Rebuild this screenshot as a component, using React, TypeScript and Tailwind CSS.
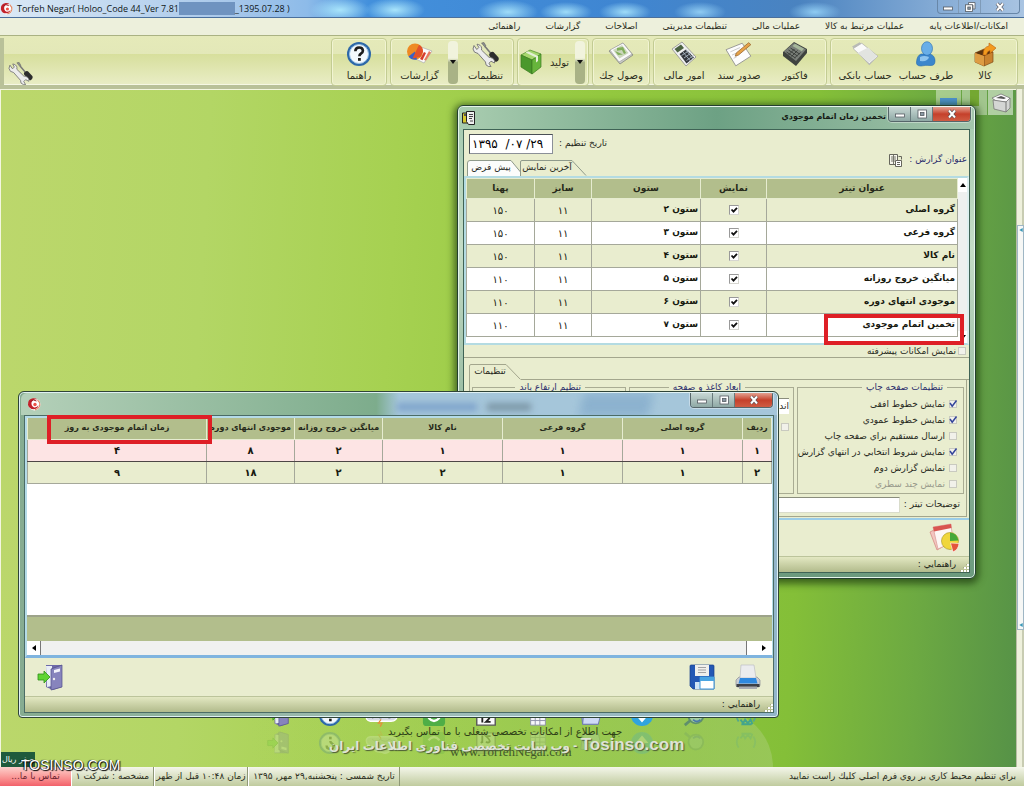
import React from "react";

type IconProps = { className?: string };

const Wrench = ({ className }: IconProps) => (
  <svg viewBox="0 0 28 26" className={className} aria-hidden="true">
    <path d="M9.500 2 12 1.500 14 5l-1.200 1z" fill="#8b8f8f" stroke="#555" strokeWidth=".5" />
    <path d="M13 5.500 18.500 12" stroke="#777" strokeWidth="1.600" />
    <path d="M17.500 12.500q1.500-2.500 4-1.500l5 5.500q1 2.500-1.500 4-1.500.8-3-.5l-4.500-5q-.8-1.200 0-2.500z" fill="#2d2d2d" />
    <path d="M2 4.500 1 8q.5 4 5 4.500l7.500 8.500q-.5 3.500 3 4.500l2.500.2-2-3.500 2-2 3.500 1.800q.8-4.500-4-5.500l-1.500-.2L9.500 9q.8-4-3-5.500L5 3.200l1.800 3.300-2 2z" fill="#ececec" stroke="#707070" strokeWidth=".9" />
  </svg>
);

const Help = ({ className }: IconProps) => (
  <svg viewBox="0 0 26 26" className={className} aria-hidden="true">
    <circle cx="13" cy="13" r="12" fill="#2d68a8" />
    <circle cx="13" cy="13" r="9.500" fill="#f4f9fd" stroke="#9cc4e6" />
    <path d="M9.300 10.300q.2-3.800 3.800-3.800t3.800 3.200q0 1.700-2 3-1.500 1-1.500 2.600" fill="none" stroke="#1d1d1d" strokeWidth="2.600" />
    <rect x="12" y="17" width="2.800" height="2.800" fill="#1d1d1d" />
  </svg>
);

const Reports = ({ className }: IconProps) => (
  <svg viewBox="0 0 28 24" className={className} aria-hidden="true">
    <path d="m15 5 11 4-8 12-10-5z" fill="#fbfbfb" stroke="#aaa" strokeWidth=".7" />
    <circle cx="9" cy="9.500" r="8" fill="#ee8a22" />
    <path d="M9 9.500 2.500 14.500q3 4 8.500 3z" fill="#3a62c4" />
    <path d="M13 2.800q4 2 4 7l-2.500 5-8 1.700z" fill="#e2512a" />
    <path d="m18 10-4 7 2.500 1.200L20 11z" fill="#d43c2c" />
    <path d="m23 9-5 9 2 .5 5-8z" fill="#e87a5e" />
  </svg>
);

const GreenBox = ({ className }: IconProps) => (
  <svg viewBox="0 0 22 26" className={className} aria-hidden="true">
    <path d="m1 6 9-5 11 4-9 6z" fill="#a5d66e" stroke="#4d8b2a" strokeWidth=".7" />
    <path d="m1 6 11 5v14L1 18z" fill="#4a982c" stroke="#3b7a21" strokeWidth=".7" />
    <path d="m12 11 9-6v13l-9 7z" fill="#67b53c" stroke="#3b7a21" strokeWidth=".7" />
    <path d="m5.500 3.500 10.500 5v5l2-1.400V7L8 2.200z" fill="#e4f0d6" />
  </svg>
);

const Cheque = ({ className }: IconProps) => (
  <svg viewBox="0 0 28 24" className={className} aria-hidden="true">
    <path d="m2 9 14-8 10 12-13 9z" fill="#c9cbc6" stroke="#83857f" strokeWidth=".8" />
    <path d="m3 8 13-7 9 11-13 8z" fill="#fafafa" stroke="#9b9b9b" strokeWidth=".6" />
    <path d="m6 8 9-5 6.500 8-9 5.500z" fill="#cbd7bd" />
    <path d="m10 6 6-1 3 6-2 1-2-4-5 .8zM8 9l3 4 5-.5" fill="#81ae5a" />
  </svg>
);

const Finance = ({ className }: IconProps) => (
  <svg viewBox="0 0 26 26" className={className} aria-hidden="true">
    <path d="M1 8 11 1l14 15-10 9z" fill="#f1f1f1" stroke="#8b8b8b" strokeWidth=".8" />
    <path d="m3.500 8 6.500-4.500 3 3.500-6.500 4.500z" fill="#4c6341" />
    <path d="m8.500 13 6.500-4.500 8 8-7.500 6z" fill="#33373d" />
    <path d="m10.500 14.500 7-4.500m-4.500 7 7-5m-4.500 7.500 7-5M12 11l7.500 9M15 9l7 9" stroke="#a9b6c3" strokeWidth=".9" />
  </svg>
);

const Voucher = ({ className }: IconProps) => (
  <svg viewBox="0 0 26 24" className={className} aria-hidden="true">
    <path d="m1 8 15-6 8 12-14 9z" fill="#fdfdfd" stroke="#8e8e8e" strokeWidth=".8" />
    <path d="m5 10 9-4m-7.500 7L11 11m-3 5 3-1.500" stroke="#bbb" strokeWidth=".7" />
    <path d="m9.500 14 1-3L22 1.500l2 1.800L12.500 13z" fill="#e6a348" stroke="#96612a" strokeWidth=".7" />
  </svg>
);

const Invoice = ({ className }: IconProps) => (
  <svg viewBox="0 0 26 26" className={className} aria-hidden="true">
    <path d="m1 11 11-10 13 7v4L14 25 1 15z" fill="#3f433f" />
    <path d="M2 10.500 12 2l12 6.500L14 20z" fill="#7a7f79" />
    <path d="m10.500 5 2.500-2.200 9 5-2.200 2.400z" fill="#a6b79a" />
    <path d="m6.500 9 9 6M8.500 7l9 6M4.500 11l9 6M12.500 8l-6 6m9-4.500-6 6m9-4-6 5.500" stroke="#343834" strokeWidth=".9" />
  </svg>
);

const BankCard = ({ className }: IconProps) => (
  <svg viewBox="0 0 26 24" className={className} aria-hidden="true">
    <path d="m1 5 7-4 17 13-8 8.500z" fill="#b9bbb6" />
    <path d="m2 7 8-5 15 12-8 7z" fill="#fafafa" stroke="#aaa" strokeWidth=".6" />
    <path d="M6 11 16 6l8 8-7 6z" fill="#e2e4e0" />
  </svg>
);

const Person = ({ className }: IconProps) => (
  <svg viewBox="0 0 22 26" className={className} aria-hidden="true">
    <path d="M6 13h9q5 1.500 5 7 0 5-5 4.500-4-.5-9 .5-5 0-4.500-4Q2 14.500 6 13z" fill="#3b86cc" stroke="#236aae" strokeWidth=".6" />
    <ellipse cx="12" cy="7.500" rx="5.500" ry="6.800" fill="#68aee8" stroke="#236aae" strokeWidth=".6" />
    <path d="M5 16q4-2 9 0-1 5-9 4z" fill="#8dc4ef" />
  </svg>
);

const Goods = ({ className }: IconProps) => (
  <svg viewBox="0 0 24 26" className={className} aria-hidden="true">
    <path d="m2 12 9-4 9 3v10l-9 4-9-4z" fill="#c9822e" stroke="#7f4a17" strokeWidth=".7" />
    <path d="m2 12 9 3 9-4-8-3z" fill="#5b340f" />
    <path d="M11 15v10" stroke="#7f4a17" />
    <path d="m2 12 9 3v10l-9-4z" fill="#dd9c42" />
    <path d="M10 14Q10 6 16 5V2l7 5-6 5.500V9.500q-3 .5-3.500 4.500z" fill="#f39a1e" stroke="#b85f10" strokeWidth=".6" />
  </svg>
);

const Swirl = ({ className }: IconProps) => (
  <svg viewBox="0 0 14 14" className={className} aria-hidden="true">
    <circle cx="7.500" cy="7.500" r="6" fill="#fff" />
    <path d="M1 8Q.5 2 6 1.200q3-.2 4.500 1.300Q6 1.800 4.600 5q-.8 4 2.500 5.400 3 .4 4.400-2.400-.3 3-3.300 4Q2.500 13 1 8z" fill="#c2222b" />
    <path d="M3.500 4.500Q6 1.500 9.500 4" fill="none" stroke="#a01a24" />
    <circle cx="8" cy="7.500" r="1.700" fill="#ed5348" />
    <path d="M10.500 3q2.500 2 2.300 5-.8 4-4.800 4.800" fill="none" stroke="#e08a6a" strokeWidth="1.200" />
  </svg>
);

const Door = ({ className }: IconProps) => (
  <svg viewBox="0 0 26 28" className={className} aria-hidden="true">
    <path d="M9 2h16v22l-9 3-7-3z" fill="#6d6aa8" />
    <path d="M9 3h6v20l-5 1z" fill="#e9eef5" />
    <path d="m14 6 11-4v22l-11 3z" fill="#8784bd" stroke="#514f8a" strokeWidth=".7" />
    <path d="m17 7 6-1.600v3L17 10z" fill="#f2f2fb" />
    <circle cx="17" cy="16" r="1.200" fill="#eee" />
    <path d="M1 11h6V8l6 6-6 6v-3H1z" fill="#5fd433" stroke="#2f8f19" strokeWidth=".8" />
  </svg>
);

const Floppy = ({ className }: IconProps) => (
  <svg viewBox="0 0 26 26" className={className} aria-hidden="true">
    <path d="M1 2q0-1 1-1h22q1 0 1 1v23H4l-3-3z" fill="#2458b4" stroke="#173f8b" strokeWidth=".7" />
    <path d="M6 1h14v11H6z" fill="#f0f0ec" />
    <path d="M9 3.500h8M9 6h8M9 8.500h8" stroke="#a3a3a3" />
    <path d="M6 18h6v7H6z" fill="#cfe4f6" />
    <path d="M11 13h14v12H11z" fill="#fff" stroke="#3c95d8" />
    <path d="M11 13h14v4H11z" fill="#4aa5e2" />
  </svg>
);

const Printer = ({ className }: IconProps) => (
  <svg viewBox="0 0 26 26" className={className} aria-hidden="true">
    <path d="M1 16l3-3h18l3 3v5q0 2-2 2H3q-2 0-2-2z" fill="#c9ccd3" stroke="#898c94" strokeWidth=".7" />
    <path d="M6 1h13l2 13H5z" fill="#ebecee" stroke="#bdbfc4" strokeWidth=".7" />
    <path d="M5 14h16l1.500 5.500h-19z" fill="#2f88de" />
    <path d="M1.500 20h23v3h-23z" fill="#3e4046" />
    <path d="M4 22.500h18V25H4z" fill="#a9abb0" />
  </svg>
);

const ReportPie = ({ className }: IconProps) => (
  <svg viewBox="0 0 30 30" className={className} aria-hidden="true">
    <path d="m1 9 8-4 6 18-7 4z" fill="#f3c5c0" stroke="#d2827c" strokeWidth=".7" />
    <path d="m4 4 18-3 2 18-15 7z" fill="#fdf6f4" stroke="#d99a94" strokeWidth=".7" />
    <path d="m4 4 18-3 .5 4L5 8.500z" fill="#d95550" />
    <circle cx="21" cy="18" r="8.500" fill="#f0d63c" stroke="#a59422" strokeWidth=".6" />
    <path d="M21 18V9.500q7 .5 8.500 8z" fill="#46a838" />
    <path d="m21.500 20 8.500.5q-.5 6-6 8.500z" fill="#e4543c" stroke="#fff" strokeWidth=".6" />
  </svg>
);

const ReportDoc = ({ className }: IconProps) => (
  <svg viewBox="0 0 14 14" className={className} aria-hidden="true">
    <path d="M.5 2h6v10h-6z" fill="#d6c82e" stroke="#222" />
    <path d="M4.500.5h8v13h-6l-2-3z" fill="#efefef" stroke="#222" />
    <path d="M7 3.500h4M7 5.500h4M7 7.500h3M8 10h3" stroke="#444" />
    <path d="M2 3h2v2H2z" fill="#555" />
  </svg>
);

const Copies = ({ className }: IconProps) => (
  <svg viewBox="0 0 14 14" className={className} aria-hidden="true">
    <path d="M.5 1.500h8v10h-8z" fill="#f6f6ec" stroke="#66665c" />
    <path d="M2 4h5M2 6h5M2 8h4M4.500 2v9" stroke="#77776d" />
    <path d="M6.500 7.500h6v6h-6z" fill="#fff" stroke="#66665c" />
    <path d="M8 9.500h3M8 11.500h3M9.500 3.500h3v3" stroke="#66665c" fill="none" />
  </svg>
);

const Storm = ({ className }: IconProps) => (
  <svg viewBox="0 0 38 26" className={className} aria-hidden="true">
    <path d="M6 20q-6-1-4-7 2-4 6-3 2-8 10-7 6-4 11 3 7 0 7 7 0 7-7 7z" fill="#d9dce6" stroke="#fff" strokeWidth="1.500" />
    <path d="M8 17q5-4 9 0 6-4 10 0 4-3 7-1" stroke="#9aa0b4" fill="none" />
    <path d="m18 18-3 4h4l-2 4" stroke="#e88d3a" strokeWidth="1.300" fill="none" />
  </svg>
);
const GreenApp = ({ className }: IconProps) => (
  <svg viewBox="0 0 26 26" className={className} aria-hidden="true">
    <rect x="1" y="1" width="24" height="24" rx="4" fill="#4fae46" />
    <path d="M7 16q6 7 12 0" stroke="#fff" strokeWidth="2.500" fill="none" />
  </svg>
);
const DayCal = ({ className }: IconProps) => (
  <svg viewBox="0 0 26 26" className={className} aria-hidden="true">
    <path d="M3 2h20v22H3z" fill="#fafafa" stroke="#555" strokeWidth="1.500" />
    <path d="M9 13v8M7.500 14.500 9 13M13 14.500q2-2 4 0 .5 2-4 6h5" stroke="#222" strokeWidth="2" fill="none" />
    <path d="M3 2h20v6H3z" fill="#888" />
  </svg>
);
const GridCal = ({ className }: IconProps) => (
  <svg viewBox="0 0 26 26" className={className} aria-hidden="true">
    <path d="M5 2h16v22H5z" fill="#f7f7fb" stroke="#8d8fa8" />
    <path d="M5 10h16M5 14h16M5 19h16M10 10v14M15 10v14" stroke="#8d8fa8" />
  </svg>
);
const FolderIcon = ({ className }: IconProps) => (
  <svg viewBox="0 0 26 26" className={className} aria-hidden="true">
    <path d="M3 6h8l2 3h9v14H5z" fill="#a9b4e2" stroke="#6a76ad" />
    <path d="m6 13 19-2-3 12H5z" fill="#cfdaf6" stroke="#6a76ad" />
  </svg>
);
const DownBall = ({ className }: IconProps) => (
  <svg viewBox="0 0 26 26" className={className} aria-hidden="true">
    <circle cx="13" cy="13" r="12" fill="#30a4e0" />
    <path d="M10 5h6v8h4l-7 8-7-8h4z" fill="#fff" />
  </svg>
);
const Magnify = ({ className }: IconProps) => (
  <svg viewBox="0 0 26 26" className={className} aria-hidden="true">
    <circle cx="15" cy="14" r="8" fill="#a3cda0" stroke="#5f8f6c" strokeWidth="2" />
    <path d="m9 19-6 5" stroke="#5f8f6c" strokeWidth="3" />
    <path d="M12 18q4 4 8 0" stroke="#4a79a8" strokeWidth="2" fill="none" />
  </svg>
);
const Globe = ({ className }: IconProps) => (
  <svg viewBox="0 0 26 26" className={className} aria-hidden="true">
    <path d="M5 20q-4-6 0-12M21 20q4-6 0-12" stroke="#54a88e" strokeWidth="2" fill="none" />
    <path d="m7 18 3 4 2-4 3 4 3-4 2 5M8 23h11" stroke="#43a58c" strokeWidth="2" fill="none" />
  </svg>
);

const Check = ({ checked = false, label, muted = false }: { checked?: boolean; label: string; muted?: boolean }) => (
  <span className="inline-grid h-2 w-2 shrink-0">
    <input
      type="checkbox"
      defaultChecked={checked}
      disabled={muted}
      aria-label={label}
      className="peer col-start-1 row-start-1 h-2 w-2 appearance-none border border-[#c9cac0] bg-[#f1f1ea]"
    />
    <svg viewBox="0 0 8 8" className="pointer-events-none invisible col-start-1 row-start-1 h-2 w-2 overflow-visible peer-checked:visible" aria-hidden="true">
      <path d="m1 3 2.200 3.200L7.500.5" stroke="#33449a" strokeWidth="1.500" fill="none" />
    </svg>
  </span>
);

const GridCheck = ({ label }: { label: string }) => (
  <span className="inline-grid h-2.5 w-2.5 align-middle">
    <input
      type="checkbox"
      defaultChecked
      aria-label={label}
      className="peer col-start-1 row-start-1 h-2.5 w-2.5 appearance-none border border-[#d6d6d0] border-t-[#999] border-l-[#999] bg-white"
    />
    <svg viewBox="0 0 10 10" className="pointer-events-none invisible col-start-1 row-start-1 h-2.5 w-2.5 peer-checked:visible" aria-hidden="true">
      <path d="m2.500 4.500 2 2.200L8 2.800" stroke="#111" strokeWidth="1.800" fill="none" />
    </svg>
  </span>
);

const Minus = () => (
  <svg viewBox="0 0 12 10" className="h-2.5 w-3" aria-hidden="true">
    <rect x="1.500" y="5" width="9" height="3" fill="#fff" stroke="#555b62" strokeWidth=".8" />
  </svg>
);
const Box = () => (
  <svg viewBox="0 0 12 10" className="h-2.5 w-3" aria-hidden="true">
    <rect x="2" y="1" width="8.500" height="8" fill="#fff" stroke="#555b62" strokeWidth=".8" />
    <rect x="4.500" y="3.500" width="3.500" height="3" fill="#8b9aa5" stroke="#555b62" strokeWidth=".8" />
  </svg>
);
const Restore = () => (
  <svg viewBox="0 0 12 10" className="h-2.5 w-3" aria-hidden="true">
    <path d="M4.500.500h6.500v6.500h-2V3h-4.500z" fill="#fff" stroke="#555b62" strokeWidth=".8" />
    <rect x="1.500" y="2.800" width="7" height="6.700" fill="#fff" stroke="#555b62" strokeWidth=".8" />
    <rect x="3.800" y="5" width="2.500" height="2.300" fill="#8b9aa5" stroke="#555b62" strokeWidth=".8" />
  </svg>
);
const Cross = () => (
  <svg viewBox="0 0 12 10" className="h-2.5 w-3" aria-hidden="true">
    <path d="m3 1.500 6 7m0-7-6 7" stroke="#4d4a50" strokeWidth="3.400" />
    <path d="m3 1.500 6 7m0-7-6 7" stroke="#fff" strokeWidth="2" />
  </svg>
);

const WindowButtons = () => (
  <div className="flex h-[15px] overflow-hidden rounded-b border border-t-0 border-[#56666a] shadow-[0_0_0_1px_#ffffff60]">
    <button aria-label="Minimize" className="flex w-[22px] items-center justify-center border-r border-[#687a7c] bg-linear-to-b from-[#c8d8d5] to-[#8fa9a5]"><Minus /></button>
    <button aria-label="Maximize" className="flex w-[22px] items-center justify-center border-r border-[#687a7c] bg-linear-to-b from-[#c8d8d5] to-[#8fa9a5]"><Box /></button>
    <button aria-label="Close" className="flex w-[37px] items-center justify-center bg-linear-to-b from-[#e3a090] via-[#c5402b] to-[#cf5c43]"><Cross /></button>
  </div>
);

const menus = [
  "امکانات/اطلاعات پایه",
  "عملیات مرتبط به کالا",
  "عملیات مالی",
  "تنظیمات مدیریتی",
  "اصلاحات",
  "گزارشات",
  "راهنمائی",
];

const ToolButton = ({ icon: Icon, text, width }: { icon: React.FC<IconProps>; text: string; width: string }) => (
  <button className={`${width} flex flex-col items-center gap-px pt-0.5 text-[10px] leading-4 whitespace-nowrap text-[#2c2e20]`}>
    <Icon className="h-[26px] w-[28px]" />
    {text}
  </button>
);

const DropStrip = ({ label }: { label: string }) => (
  <button aria-label={label} className="flex h-[43px] w-[10px] items-center justify-center self-center rounded-sm bg-linear-to-b from-[#f1f3dd] from-40% to-[#a9b286] to-50%">
    <svg viewBox="0 0 6 4" className="h-1 w-1.5" aria-hidden="true"><path d="M0 0h6L3 4z" fill="#111" /></svg>
  </button>
);

const groupCls = "flex h-[48px] rounded border border-[#c3cc93] shadow-[inset_0_0_0_1px_#f1f4d2]";

const titleRows: [string, string, string][] = [
  ["گروه اصلی", "ستون ۲", "۱۵۰"],
  ["گروه فرعی", "ستون ۳", "۱۵۰"],
  ["نام کالا", "ستون ۴", "۱۵۰"],
  ["میانگین خروج روزانه", "ستون ۵", "۱۱۰"],
  ["موجودی انتهای دوره", "ستون ۶", "۱۱۰"],
  ["تخمین اتمام موجودی", "ستون ۷", "۱۱۰"],
];

const options: { text: string; on?: boolean; muted?: boolean }[] = [
  { text: "نمایش خطوط افقی", on: true },
  { text: "نمایش خطوط عمودي", on: true },
  { text: "ارسال مستقیم براي صفحه چاپ" },
  { text: "نمایش شروط انتخابي در انتهاي گزارش", on: true },
  { text: "نمایش گزارش دوم" },
  { text: "نمایش چند سطري", muted: true },
];

const resultHead = ["ردیف", "گروه اصلی", "گروه فرعی", "نام کالا", "میانگین خروج روزانه", "موجودی انتهای دوره", "زمان اتمام موجودی به روز"];
const resultRows = [
  ["۱", "۱", "۱", "۱", "۲", "۸", "۴"],
  ["۲", "۱", "۱", "۲", "۲", "۱۸", "۹"],
];

const dock = [Door, Help, Storm, GreenApp, DayCal, GridCal, FolderIcon, DownBall, Magnify, Globe];

const Grip = () => (
  <svg viewBox="0 0 9 9" className="h-[9px] w-[9px] self-end" aria-hidden="true">
    <path d="M7 1h2v2H7zM4 4h2v2H4zM7 4h2v2H7zM1 7h2v2H1zM4 7h2v2H4zM7 7h2v2H7z" fill="#fff" />
    <path d="M6 1h1v1H6zM3 4h1v1H3zM6 4h1v1H6zM0 7h1v1H0zM3 7h1v1H3zM6 7h1v1H6z" fill="#a4ab82" />
  </svg>
);

const HelpBar = () => (
  <div dir="rtl" className="flex h-4 shrink-0 items-center border-t border-[#bcc49b] bg-linear-to-b from-[#e3e8c2] to-[#b2bb8c] pl-0.5 text-[9px] text-[#23251a]">
    <Grip />
    <span className="px-1">راهنمايي :</span>
  </div>
);

const TitlesWindow = () => (
  <section className="absolute top-[15px] left-[456px] flex h-[474px] w-[519px] flex-col rounded-md border border-[#24402f] bg-linear-to-b from-[#a3c9ae] via-[#c4dcc6] via-30% to-[#6b9a7e] px-[5px] pb-[5px] shadow-[0_2px_7px_3px_#1d3c10b0,inset_0_0_0_1px_#e4f4ea]">
    <header className="-mx-1 mt-px flex h-[22px] shrink-0 items-start justify-between rounded-t-md bg-linear-to-r from-[#a9cdb0] via-[#6da184] via-50% to-[#a3c5ac] px-[3px]">
      <ReportDoc className="mt-1 h-[14px] w-[14px]" />
      <div className="flex items-start gap-0.5">
        <h2 dir="rtl" className="pt-0.5 text-[8px] leading-4 font-bold text-[#151b15]">تخمين زمان اتمام موجودي</h2>
        <WindowButtons />
      </div>
    </header>
    <div className="flex min-h-0 flex-1 flex-col border border-[#3f6355] bg-[#e9edcf] text-[9px] text-[#26281c]">
      <div className="flex h-[46px] shrink-0 items-stretch justify-between pr-0.5 pl-[3px]">
        <div className="flex flex-col justify-between pt-1">
          <label dir="rtl" className="flex flex-row-reverse items-center justify-end gap-1.5 pl-0.5">
            <input dir="ltr" aria-label="تاریخ تنظیم" defaultValue="۱۳۹۵  /۰۷ /۲۹" className="h-5 w-[84px] border border-[#8b9098] border-t-[#4a4f55] border-l-[#4a4f55] bg-white px-0.5 text-[12px] whitespace-pre text-black" />
            <span>تاریخ تنظیم :</span>
          </label>
          <div className="flex h-4 items-end">
            <button className="grid h-4 w-[54px] text-[9px]">
              <svg viewBox="0 0 54 16" preserveAspectRatio="none" className="col-start-1 row-start-1 h-4 w-[54px]" aria-hidden="true"><path d="M.5 16V3Q.5.500 3 .5h41L53.500 12v4" fill="#fbfcfb" stroke="#8f9a8b" /></svg>
              <span className="col-start-1 row-start-1 self-center pr-1.5">پیش فرض</span>
            </button>
            <button className="-ml-1 grid h-4 w-[70px] text-[9px]">
              <svg viewBox="0 0 70 16" className="col-start-1 row-start-1 h-4 w-[70px]" aria-hidden="true"><path d="M3.500 16V2Q3.500.500 5 .5h50L69 15.500" fill="none" stroke="#8f9a8b" /></svg>
              <span className="col-start-1 row-start-1 self-center pr-2.5">آخرین نمایش</span>
            </button>
          </div>
        </div>
        <div dir="rtl" className="flex items-center gap-1.5 pt-[13px] text-[#2d2f6d]">
          <span>عنوان گزارش :</span>
          <Copies className="h-[14px] w-[14px]" />
        </div>
      </div>
      <div dir="rtl" className="flex h-[169px] shrink-0 border-2 border-[#b4dbe2] border-r-[#dff0f0] bg-white">
        <div className="flex w-[9px] shrink-0 flex-col justify-between bg-[#eef0ef]">
          <button aria-label="Scroll up" className="flex h-[14px] items-center justify-center bg-white"><svg viewBox="0 0 6 4" className="h-1 w-1.5"><path d="M0 4h6L3 0z" /></svg></button>
          <button aria-label="Scroll down" className="flex h-[12px] items-center justify-center bg-white"><svg viewBox="0 0 6 4" className="h-1 w-1.5"><path d="M0 0h6L3 4z" /></svg></button>
        </div>
        <table className="h-[158px] flex-1 table-fixed border-collapse text-[9px] font-bold text-[#17190f]">
          <thead>
            <tr className="h-5 bg-[#b2be8c] text-[#26291a]">
              <th className="border border-[#e6ecd0]">عنوان تیتر</th>
              <th className="w-[66px] border border-[#e6ecd0]">نمایش</th>
              <th className="w-[109px] border border-[#e6ecd0]">ستون</th>
              <th className="w-[57px] border border-[#e6ecd0]">سایز</th>
              <th className="w-[68px] border border-[#e6ecd0]">پهنا</th>
            </tr>
          </thead>
          <tbody>
            {titleRows.map(([name, col, w]) => (
              <tr key={name} className="h-[23px] bg-white odd:bg-[#e9edcf]">
                <td className="border border-[#a5a89a] p-0 pr-0.5">{name}</td>
                <td className="border border-[#a5a89a] p-0 text-center leading-none"><GridCheck label={name} /></td>
                <td className="border border-[#a5a89a] p-0 pr-0.5">{col}</td>
                <td className="border border-[#a5a89a] p-0 text-center text-[10px] font-normal">۱۱</td>
                <td className="border border-[#a5a89a] p-0 text-center text-[10px] font-normal">{w}</td>
              </tr>
            ))}
          </tbody>
        </table>
      </div>
      <label dir="rtl" className="flex h-[13px] shrink-0 items-center gap-0.5 border-b border-[#a3a68d] pr-[3px]">
        <Check label="نمایش امکانات پیشرفته" />
        <span className="leading-3">نمایش امکانات پیشرفته</span>
      </label>
      <div className="mt-[6px] ml-[5px] flex h-4 shrink-0">
        <button className="grid h-4 w-[52px] text-[9px]">
          <svg viewBox="0 0 52 16" className="col-start-1 row-start-1 h-4 w-[52px]" aria-hidden="true"><path d="M.5 16V2Q.5.500 2 .5h35L51.500 15.500" fill="none" stroke="#a3a68d" /></svg>
          <span className="col-start-1 row-start-1 self-center pr-2.5">تنظیمات</span>
        </button>
        <div className="flex-1 border-b border-[#a3a68d]" />
      </div>
      <div dir="rtl" className="mr-0.5 ml-[5px] flex h-[137px] shrink-0 flex-col border-x border-b border-[#a3a68d]">
        <div className="flex gap-[3px] px-0.5">
          <fieldset className="h-[114px] w-[167px] min-w-0 shrink-0 border border-[#a9ac93] pr-1.5">
            <legend className="mr-2.5 px-1 leading-[14px] text-[#2d2f6d]">تنظیمات صفحه چاپ</legend>
            <div className="pt-0.5">
              {options.map((o) => (
                <label key={o.text} className={`flex h-4 items-center gap-1 whitespace-nowrap ${o.muted ? "text-[#96988a]" : ""}`}>
                  <Check checked={o.on} muted={o.muted} label={o.text} />
                  <span className="leading-4">{o.text}</span>
                </label>
              ))}
            </div>
          </fieldset>
          <fieldset className="h-[114px] min-w-0 flex-1 border border-[#a9ac93] pr-1">
            <legend className="mr-11 px-1 leading-[14px] text-[#2d2f6d]">ابعاد کاغذ و صفحه</legend>
            <select aria-label="اندازه کاغذ" className="mt-1 block h-4 w-[120px] appearance-none border-t border-[#8a8d7c] bg-white">
              <option>اندازه کاغذ</option>
            </select>
            <label className="mt-1.5 flex items-center gap-1">
              <Check label="نمایش حاشیه" />
              <span>نمایش حاشیه</span>
            </label>
          </fieldset>
          <fieldset className="h-[114px] w-[154px] min-w-0 border border-[#a9ac93]">
            <legend className="mr-10 px-1 leading-[14px] text-[#2d2f6d]">تنظیم ارتفاع باند</legend>
          </fieldset>
        </div>
        <label className="flex items-center gap-1 pt-[3px] pr-1.5">
          <span>توضیحات تیتر :</span>
          <input aria-label="توضیحات تیتر" className="h-4 flex-1 border border-[#d9dccb] border-t-[#8a8d7c] bg-white" />
        </label>
      </div>
      <div className="mt-px flex flex-1 items-center justify-end border-t-2 border-[#9bcde8] pr-2.5">
        <button aria-label="گزارش"><ReportPie className="h-[30px] w-[30px]" /></button>
      </div>
      <HelpBar />
    </div>
    <div className="pointer-events-none absolute top-[208px] left-[366px] h-[31px] w-[140px] border-4 border-[#de1f26]" />
  </section>
);

const ResultWindow = () => (
  <section className="absolute top-[301px] left-[17px] flex h-[327px] w-[761px] flex-col rounded-t-md rounded-b-sm border border-[#2f4438] bg-linear-to-r from-[#86ac91] via-[#9fbdb4] to-[#93b6cb] pr-1 pb-1 pl-[5px] shadow-[inset_0_0_0_1px_#dff1f3]">
    <header className="relative -mx-[3px] mt-px flex h-[22px] shrink-0 items-start justify-between overflow-hidden rounded-t-md bg-linear-to-r from-[#b4d0b9] via-[#7dac8c] via-47% to-[#a5c6da] to-50% pr-1 pl-1.5">
      <div className="absolute top-2.5 left-[376px] h-2 w-[80px] bg-[#7fa4cc] blur-[3px]" />
      <div className="absolute top-2.5 left-[466px] h-2 w-[44px] bg-[#7d98a8] blur-[3px]" />
      <div className="absolute top-0 left-[560px] h-6 w-[70px] -skew-x-12 bg-[#8cb2cf] blur-[5px]" />
      <Swirl className="relative mt-1 h-[14px] w-[14px]" />
      <div className="relative"><WindowButtons /></div>
    </header>
    <div className="flex min-h-0 flex-1 flex-col border border-[#4b6c66] bg-[#e9edcf]">
      <div dir="rtl" className="flex h-[242px] shrink-0 flex-col border-2 border-r-[1px] border-b-[3px] border-[#b4dbe8] border-b-[#7fb4df] bg-white">
        <table className="w-full table-fixed border-collapse text-[10px] font-bold text-[#17190f]">
          <thead>
            <tr className="h-[21px] bg-[#b2be8c] text-[8px] whitespace-nowrap text-[#26291a]">
              {resultHead.map((h, i) => (
                <th
                  key={h}
                  className={`border border-[#e6ecd0] border-t-0 p-0 ${i === 0 ? "w-[29px]" : i < 4 ? "w-[120px]" : i < 6 ? "w-[88px]" : ""}`}
                >
                  {h}
                </th>
              ))}
            </tr>
          </thead>
          <tbody>
            {resultRows.map((r, ri) => (
              <tr key={ri} className={`h-[22px] text-center ${ri === 0 ? "bg-[#fde4e4]" : "bg-[#e9edcf]"}`}>
                {r.map((c, i) => (
                  <td key={i} className={`border border-[#a5a89a] p-0 ${ri === 0 ? "border-b-[#4d4646]" : ""}`}>{c}</td>
                ))}
              </tr>
            ))}
          </tbody>
        </table>
        <div className="flex-1" />
        <div className="h-[26px] border-t-2 border-[#9da38a] bg-[#b2be8c]" />
        <div dir="ltr" className="flex h-[14px] justify-between bg-[#f0f1f0]">
          <button aria-label="Scroll left" className="flex w-[14px] items-center justify-center border-r border-[#777] bg-white"><svg viewBox="0 0 4 6" className="h-1.5 w-1"><path d="M4 0v6L0 3z" /></svg></button>
          <button aria-label="Scroll right" className="flex w-[26px] items-center justify-end border-l border-[#777] bg-white pr-1.5"><svg viewBox="0 0 4 6" className="h-1.5 w-1"><path d="M0 0v6l4-3z" /></svg></button>
        </div>
      </div>
      <div className="flex flex-1 items-center justify-between px-3">
        <button aria-label="خروج"><Door className="h-[28px] w-[26px]" /></button>
        <div className="flex gap-5">
          <button aria-label="ذخیره"><Floppy className="h-[26px] w-[26px]" /></button>
          <button aria-label="چاپ"><Printer className="h-[26px] w-[26px]" /></button>
        </div>
      </div>
      <HelpBar />
    </div>
    <div className="pointer-events-none absolute top-[23px] left-[28px] h-[29px] w-[165px] border-4 border-[#de1f26]" />
  </section>
);

export default function App() {
  return (
    <div className="flex min-h-screen flex-col overflow-hidden bg-[#e9edcf] font-['DejaVu_Sans',sans-serif]">
      <header className="flex h-[18px] shrink-0 items-start justify-between border-b border-[#4a6f9c] bg-[radial-gradient(ellipse_30px_12px_at_340px_10px,#a8e4fb,transparent),radial-gradient(ellipse_30px_12px_at_395px_10px,#a8e4fb,transparent),radial-gradient(ellipse_30px_12px_at_508px_12px,#9fdcf8,transparent),radial-gradient(ellipse_26px_10px_at_566px_12px,#9fdcf8,transparent),radial-gradient(ellipse_26px_10px_at_625px_12px,#9fdcf8,transparent),radial-gradient(ellipse_26px_10px_at_700px_12px,#8fcbf2,transparent),radial-gradient(ellipse_26px_10px_at_815px_12px,#8fcbf2,transparent),linear-gradient(to_right,#dbe9f6,#a9c8ea_22%,#8dbbe9_30%,#4390dc_36%,#3f86d2_60%,#4a83c0_78%,#a9c4e2)] pr-1">
        <h1 dir="ltr" className="flex h-[17px] items-center font-['Open_Sans',sans-serif] text-[9px] whitespace-nowrap text-[#101820]">
          <Swirl className="mr-1 h-[13px] w-[13px]" />
          <span>Torfeh Negar( Holoo_Code 44_Ver 7.81</span>
          <span className="h-[13px] w-14 bg-[#6f93c0]" />
          <span>_1395.07.28 )</span>
        </h1>
        <div className="flex h-[14px] rounded-b border border-t-0 border-[#6887a8]">
          <button aria-label="Minimize" className="flex w-[21px] items-center justify-center border-r border-[#7f9bb8]"><Minus /></button>
          <button aria-label="Restore" className="flex w-[22px] items-center justify-center border-r border-[#7f9bb8]"><Restore /></button>
          <button aria-label="Close" className="flex w-[38px] items-center justify-center"><Cross /></button>
        </div>
      </header>

      <nav dir="rtl" className="flex h-[17px] shrink-0 items-center gap-[25px] bg-[#edf0dc] pr-4 text-[9px] whitespace-nowrap text-[#2a2c20]">
        {menus.map((t) => (
          <a key={t} href="#">{t}</a>
        ))}
      </nav>

      <div dir="rtl" className="flex h-[54px] shrink-0 items-start justify-between border-t border-b-4 border-[#aab283] border-b-[#b9c199] bg-[linear-gradient(#e5eab9,#e3e8b8_36%,#d7df9c_37%,#e9edc6)] pt-0.5 pr-1.5 shadow-[inset_0_-1px_0_#f6f8e4]">
        <div className="flex gap-[3px]">
          <div className={groupCls}>
            <ToolButton icon={Goods} text="کالا" width="w-[64px]" />
            <ToolButton icon={Person} text="طرف حساب" width="w-[54px]" />
            <ToolButton icon={BankCard} text="حساب بانکی" width="w-[68px]" />
          </div>
          <div className={groupCls}>
            <ToolButton icon={Invoice} text="فاکتور" width="w-[62px]" />
            <ToolButton icon={Voucher} text="صدور سند" width="w-[50px]" />
            <ToolButton icon={Finance} text="امور مالی" width="w-[60px]" />
          </div>
          <div className={groupCls}>
            <ToolButton icon={Cheque} text="وصول چك" width="w-[56px]" />
          </div>
          <div className={groupCls}>
            <span className="w-[3px]" />
            <DropStrip label="تولید" />
            <button className="flex w-[57px] items-center justify-center gap-2 pr-1 text-[10px] text-[#2c2e20]">
              تولید
              <GreenBox className="h-[26px] w-[22px]" />
            </button>
          </div>
          <div className={groupCls}>
            <ToolButton icon={Wrench} text="تنظیمات" width="w-[55px]" />
            <DropStrip label="گزارشات" />
            <ToolButton icon={Reports} text="گزارشات" width="w-[57px]" />
          </div>
          <div className={groupCls}>
            <ToolButton icon={Help} text="راهنما" width="w-[54px]" />
          </div>
        </div>
        <div className="flex h-[49px] items-end border-l-4 border-[#b9c199] pb-0.5 pl-1">
          <Wrench className="h-6 w-[26px]" />
        </div>
      </div>

      <main className="flex min-h-[678px] flex-1">
        <div className="relative flex-1 overflow-hidden border-t border-l border-[#f3f6e0] bg-[linear-gradient(93deg,#bcd76c,#b3d665_20%,#a6d151_38%,#93c83f_58%,#84bf38_78%,#6ca942_90%,#569247)]">
          <div className="absolute top-0 right-[3px] flex gap-px">
            <div className="h-[25px] w-[25px] bg-white/40 p-1"><div className="mt-1 h-2 bg-[#4c92cf]" /></div>
            <div className="h-[25px] w-[25px] bg-white/40 px-2"><div className="h-4 bg-[#74a832]" /></div>
            <button aria-label="بایگانی" className="flex h-[25px] w-[25px] items-center justify-center bg-white/50">
              <svg viewBox="0 0 22 22" className="h-[22px] w-[22px]" aria-hidden="true">
                <path d="m2 6 9-4 9 4-3 4-11-1z" fill="#fafafa" stroke="#777" strokeWidth=".8" />
                <path d="m3 8 13 2 4-4v10l-4 4-12-3z" fill="#d4d6d4" stroke="#777" strokeWidth=".8" />
                <path d="M16 10v10" stroke="#777" />
                <path d="m6 6 5-2 5 2-2 1z" fill="#555" />
              </svg>
            </button>
          </div>

          <div className="absolute bottom-0 left-[244px] h-[58px] w-[528px] rounded-tr-[60px] bg-linear-to-r from-transparent to-[#a4cb6c]/60" />
          <div className="absolute bottom-[12px] left-[258px] flex gap-[14px]">
            {dock.map((Icon, i) => (
              <div key={i} className="flex w-[38px] flex-col items-center gap-1">
                <Icon className="h-6 w-[34px]" />
                <Icon className="h-6 w-[34px] -scale-y-100 opacity-20" />
              </div>
            ))}
          </div>
          <p dir="rtl" className="absolute bottom-[25px] left-[387px] text-[10px] leading-5 whitespace-nowrap text-[#2e4017]">جهت اطلاع از امکانات تخصصی شغلی با ما تماس بگیرید</p>
          <p className="absolute bottom-[7px] left-[449px] font-['Liberation_Serif',serif] text-[13px] leading-4 text-[#40582a]">www.TorfehNegar.com</p>
          <p dir="rtl" className="absolute bottom-[9px] left-[328px] font-['Liberation_Sans','DejaVu_Sans',sans-serif] text-[12px] leading-6 font-bold whitespace-nowrap text-[#dfe3d6] [text-shadow:1px_1px_1px_#4c5b36]">
            <span className="text-[17px]">Tosinso.com</span> - وب سایت تخصصی فناوری اطلاعات ایران
          </p>
          <TitlesWindow />
          <ResultWindow />
          <div dir="rtl" className="absolute bottom-0 left-0 h-[15px] bg-[#1f5a3c] px-px text-[8px] leading-[15px] whitespace-nowrap text-white">صفر ریال</div>
        </div>
        <aside className="flex w-2 flex-col border-l border-[#b9bda5] bg-[#eef0dc]">
          <div className="h-[136px] border-r-2 border-[#c8ccb2]" />
          <div className="flex h-[405px] flex-col justify-between border border-[#9fb6c4] bg-[#f6f7f5] py-0.5">
            <svg viewBox="0 0 5 6" className="h-1 w-1.5"><path d="M5 0v6L0 3z" fill="#3a98b8" /></svg>
            <svg viewBox="0 0 5 6" className="h-1 w-1.5"><path d="M5 0v6L0 3z" fill="#3a98b8" /></svg>
          </div>
          <div className="flex-1 border-r-2 border-[#c8ccb2]" />
        </aside>
      </main>

      <footer dir="rtl" className="relative flex h-[19px] shrink-0 items-stretch bg-linear-to-b from-[#f4f6ea] to-[#c0cb9e] text-[9px] leading-[19px] whitespace-nowrap text-[#2a2c20]">
        <span className="flex-1 pr-2">براي تنظیم محیط کاري بر روي فرم اصلي کلیك راست نمایید</span>
        <span className="w-[152px] border-x border-r-[#8f9877] border-l-white text-center">تاریخ شمسی : پنجشنبه,۲۹ مهر, ۱۳۹۵</span>
        <span className="w-[94px] border-x border-r-[#8f9877] border-l-white text-center">زمان ۱۰:۴۸ قبل از ظهر</span>
        <span className="w-[83px] border-x border-r-[#8f9877] border-l-white text-center">مشخصه : شرکت ۱</span>
        <a href="#" className="w-[71px] bg-linear-to-b from-[#fbd0cc] to-[#f2606a] text-center text-[#6a2430]">تماس با ما...</a>
        <div dir="ltr" className="pointer-events-none absolute bottom-[13px] left-[21px] font-['Liberation_Sans',sans-serif] text-[14px] leading-4 text-white [text-shadow:1px_1px_1px_#000,-1px_0_1px_#000]">TOSINSO.COM</div>
      </footer>
    </div>
  );
}
